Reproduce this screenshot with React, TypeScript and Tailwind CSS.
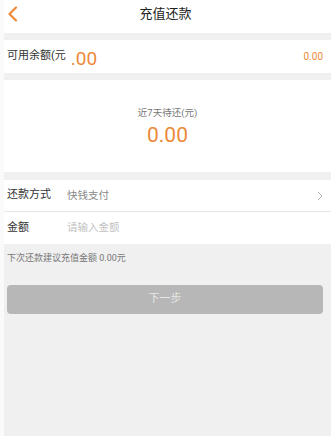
import React from "react";

export default function App() {
  const font = { fontFamily: 'Roboto, "Noto Sans CJK SC", sans-serif' };
  return (
    <div
      style={font}
      className="w-[331px] h-[436px] overflow-hidden bg-[#f0f0f0] border-l-[4px] border-l-[#fafafa] flex flex-col"
    >
      {/* header */}
      <div className="h-[33px] bg-white grid grid-cols-[40px_1fr_40px] items-center -ml-[4px]">
        <div className="pl-[7px] pb-[6px] flex items-center">
          <svg width="11" height="16" viewBox="0 0 11 16" fill="none">
            <path d="M9 1.5L2.5 8L9 14.5" stroke="#ec8a3a" strokeWidth="2.2" strokeLinecap="round" strokeLinejoin="round" />
          </svg>
        </div>
        <div className="text-center text-[13px] text-[#222] pb-[6px]">充值还款</div>
        <div />
      </div>

      {/* balance row */}
      <div className="mt-[7px] h-[33px] bg-white flex items-center pl-[3px] pr-[8px]">
        <span className="text-[11px] text-[#333]">可用余额(元</span>
        <span className="text-[19px] leading-none text-[#ec8a3a] ml-[5px] mt-[4px]">.00</span>
        <span className="ml-auto text-[10px] text-[#ec8a3a]">0.00</span>
      </div>

      {/* card */}
      <div className="mt-[7px] h-[92px] bg-white flex flex-col items-center pt-[26px]">
        <span className="text-[9.5px] text-[#777] leading-[14px]">近7天待还(元)</span>
        <span className="text-[21px] leading-[24px] text-[#ec8a3a] mt-[3px]">0.00</span>
      </div>

      {/* form */}
      <div className="mt-[8px] bg-white flex flex-col">
        <div className="h-[32px] flex items-center border-b border-[#e6e6e6] pl-[3px] pr-[8px]">
          <span className="w-[60px] text-[11px] text-[#333]">还款方式</span>
          <span className="text-[10.5px] text-[#888]">快钱支付</span>
          <svg className="ml-auto" width="6" height="10" viewBox="0 0 6 10" fill="none">
            <path d="M1 1l4 4-4 4" stroke="#b5b5b5" strokeWidth="1" />
          </svg>
        </div>
        <div className="h-[32px] flex items-center pl-[3px] pr-[8px]">
          <span className="w-[60px] text-[11px] text-[#333]">金额</span>
          <span className="text-[10.5px] text-[#c2c2c2]">请输入金额</span>
        </div>
      </div>

      {/* hint */}
      <div className="mt-[8px] pl-[3px] text-[9px] leading-[12px] text-[#777]">下次还款建议充值金额 0.00元</div>

      {/* button */}
      <div className="mt-[21px] ml-[3px] mr-[8px] h-[29px] rounded-[4px] bg-[#b7b7b7] flex items-center justify-center">
        <span className="text-[11px] text-[#e6e6e6]">下一步</span>
      </div>
    </div>
  );
}
